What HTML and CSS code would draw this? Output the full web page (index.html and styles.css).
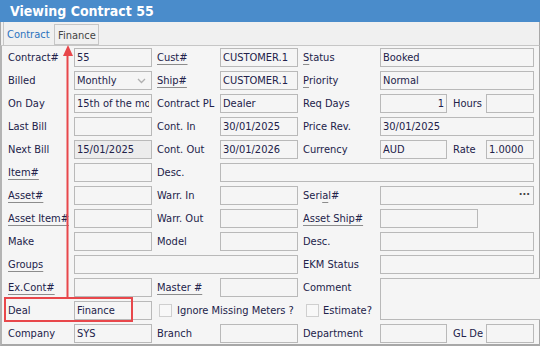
FILE: index.html
```html
<!DOCTYPE html>
<html lang="en">
<head>
    <meta charset="UTF-8">
    <title>Viewing Contract 55</title>
    <link rel="stylesheet" href="styles.css">
</head>
<body>

    <div class="window">
        <div class="titlebar">Viewing Contract 55</div>

        <div class="tabs">
            <div class="tab active">Contract</div>
            <div class="tab">Finance</div>
        </div>

        <div class="form">
            <!-- row 1 -->
            <div class="lbl">Contract#</div>
            <div class="fld">55</div>
            <div class="lbl pad"><span class="ul">Cust#</span></div>
            <div class="fld">CUSTOMER.1</div>
            <div class="lbl pad"><span class="ul">S</span>tatus</div>
            <div class="fld span3">Booked</div>

            <!-- row 2 -->
            <div class="lbl">Billed</div>
            <div class="fld select">Monthly
                <svg class="chev" width="9" height="6" viewBox="0 0 9 6"><polyline points="1,1 4.5,4.5 8,1" fill="none" stroke="#b0b0b0" stroke-width="1.3"/></svg>
            </div>
            <div class="lbl pad"><span class="ul">Ship#</span></div>
            <div class="fld">CUSTOMER.1</div>
            <div class="lbl pad"><span class="ul">P</span>riority</div>
            <div class="fld span3">Normal</div>

            <!-- row 3 -->
            <div class="lbl">On Day</div>
            <div class="fld"><span class="clip">15th of the month</span></div>
            <div class="lbl pad">Contract PL</div>
            <div class="fld">Dealer</div>
            <div class="lbl pad">Req Days</div>
            <div class="fld num">1</div>
            <div class="lbl pad-sm">Hours</div>
            <div class="fld"></div>

            <!-- row 4 -->
            <div class="lbl">Last Bill</div>
            <div class="fld"></div>
            <div class="lbl pad">Cont. In</div>
            <div class="fld">30/01/2025</div>
            <div class="lbl pad">Price Rev.</div>
            <div class="fld span3">30/01/2025</div>

            <!-- row 5 -->
            <div class="lbl">Next Bill</div>
            <div class="fld locked">15/01/2025</div>
            <div class="lbl pad">Cont. Out</div>
            <div class="fld">30/01/2026</div>
            <div class="lbl pad">Currency</div>
            <div class="fld">AUD</div>
            <div class="lbl pad-sm">Rate</div>
            <div class="fld">1.0000</div>

            <!-- row 6 -->
            <div class="lbl"><span class="ul">Item#</span></div>
            <div class="fld"></div>
            <div class="lbl pad">Desc.</div>
            <div class="fld span5"></div>

            <!-- row 7 -->
            <div class="lbl"><span class="ul">Asset#</span></div>
            <div class="fld"></div>
            <div class="lbl pad">Warr. In</div>
            <div class="fld"></div>
            <div class="lbl pad">Seri<span class="ul">a</span>l#</div>
            <div class="fld span3 lookup"><span class="dots">&middot;&middot;&middot;</span></div>

            <!-- row 8 -->
            <div class="lbl"><span class="ul">Asset Item#</span></div>
            <div class="fld"></div>
            <div class="lbl pad">Warr. Out</div>
            <div class="fld"></div>
            <div class="lbl pad"><span class="ul">Asset Ship#</span></div>
            <div class="fld span2 short"></div>
            <div class="blank"></div>

            <!-- row 9 -->
            <div class="lbl">Make</div>
            <div class="fld"></div>
            <div class="lbl pad">Model</div>
            <div class="fld"></div>
            <div class="lbl pad">Desc.</div>
            <div class="fld span3"></div>

            <!-- row 10 -->
            <div class="lbl"><span class="ul">Groups</span></div>
            <div class="fld span3"></div>
            <div class="lbl pad">EKM Status</div>
            <div class="fld span3"></div>

            <!-- row 11 -->
            <div class="lbl"><span class="ul">Ex.Cont#</span></div>
            <div class="fld"></div>
            <div class="lbl pad"><span class="ul">Master #</span></div>
            <div class="fld"></div>
            <div class="lbl pad">Comment</div>
            <div class="fld comment"></div>

            <!-- row 12 -->
            <div class="lbl">Deal</div>
            <div class="fld">Finance</div>
            <div class="check span2 ignore"><span class="box"></span>Ignore Missing Meters ?</div>
            <div class="check estimate"><span class="box"></span>Estimate?</div>

            <!-- row 13 -->
            <div class="lbl">Company</div>
            <div class="fld">SYS</div>
            <div class="lbl pad">Branch</div>
            <div class="fld"></div>
            <div class="lbl pad">Department</div>
            <div class="fld"></div>
            <div class="lbl pad-sm">GL De</div>
            <div class="fld"></div>
        </div>

        <!-- red callout drawn over the form -->
        <svg class="callout" width="540" height="346" viewBox="0 0 540 346">
            <line x1="67.5" y1="53" x2="67.5" y2="298" stroke="#e8474b" stroke-width="2"/>
            <polygon points="68,45 63,56 73,56" fill="#e8474b"/>
            <rect x="5" y="298" width="127" height="23" fill="none" stroke="#e8474b" stroke-width="2"/>
        </svg>
    </div>

</body>
</html>
```

FILE: styles.css
```css
body {
    margin: 0;
    background-color: #fff;
    font-family: "DejaVu Sans Condensed", "Liberation Sans", sans-serif;
    font-size: 11px;
    color: #22224a;
}

.window {
    position: relative;
    width: 540px;
    height: 346px;
    overflow: hidden;
    background-color: #f5f5f5;
}

.titlebar {
    height: 22px;
    line-height: 22px;
    padding-left: 10px;
    background-color: #4a8ccb;
    color: #fff;
    font-weight: bold;
    font-size: 14px;
}

.tabs {
    display: flex;
    height: 23px;
    padding-left: 2px;
    background-color: #f0f0f0;
    border-bottom: 1px solid #c6c6c6;
    border-left: 1px solid #a8a8a8;
    border-right: 1px solid #a8a8a8;
}

.tab {
    display: flex;
    align-items: center;
    box-sizing: border-box;
    font-size: 11px;
}

.tab.active {
    height: 23px;
    width: 51px;
    padding: 1px 0 0 3px;
    border-left: 1px solid #c6c6c6;
    color: #2b72bf;
}

.tab:not(.active) {
    height: 21px;
    width: 45px;
    margin-top: 2px;
    padding: 2px 0 0 3px;
    border: 1px solid #c6c6c6;
    color: #444;
}

.form {
    display: grid;
    grid-template-columns: 66px 78px 68px 78px 82px 67px 39px 48px;
    grid-auto-rows: 19px;
    row-gap: 4px;
    height: 300px;
    box-sizing: border-box;
    padding: 2px 0 0 6px;
    border-left: 2px solid #b4b4b4;
    border-right: 1px solid #a8a8a8;
    border-bottom: 2px solid #a8a8a8;
}

.lbl {
    display: flex;
    align-items: center;
    white-space: nowrap;
}

.lbl.pad {
    padding-left: 5px;
}

.lbl.pad-sm {
    padding-left: 6px;
}

.ul {
    text-decoration: underline;
    text-decoration-color: #8c8c8c;
    text-underline-offset: 3px;
}

.fld {
    position: relative;
    box-sizing: border-box;
    border: 1px solid #b9b9b9;
    background-color: #f5f5f5;
    padding: 0 2px;
    line-height: 17px;
    white-space: nowrap;
    overflow: hidden;
}

.clip {
    display: block;
    overflow: hidden;
}

.fld.locked {
    background-color: #ececec;
}

.fld.num {
    text-align: right;
}

.span2 {
    grid-column: span 2;
}

.span3 {
    grid-column: span 3;
}

.span5 {
    grid-column: span 5;
}

.fld.short {
    width: 98px;
}

.fld.comment {
    grid-column: 6 / 9;
    grid-row: 11 / span 2;
    margin-right: -12px;
}

.chev {
    position: absolute;
    right: 5px;
    top: 6px;
}

.dots {
    position: absolute;
    right: 3px;
    top: -1px;
    font-weight: bold;
    color: #444;
}

.check {
    display: flex;
    align-items: center;
    white-space: nowrap;
}

.check .box {
    width: 13px;
    height: 13px;
    box-sizing: border-box;
    border: 1px solid #cfcfcf;
    background-color: #f8f8f8;
}

.check.ignore {
    padding-left: 7px;
    gap: 5px;
}

.check.estimate {
    padding-left: 8px;
    gap: 4px;
}

.callout {
    position: absolute;
    left: 0;
    top: 0;
    pointer-events: none;
}
```
